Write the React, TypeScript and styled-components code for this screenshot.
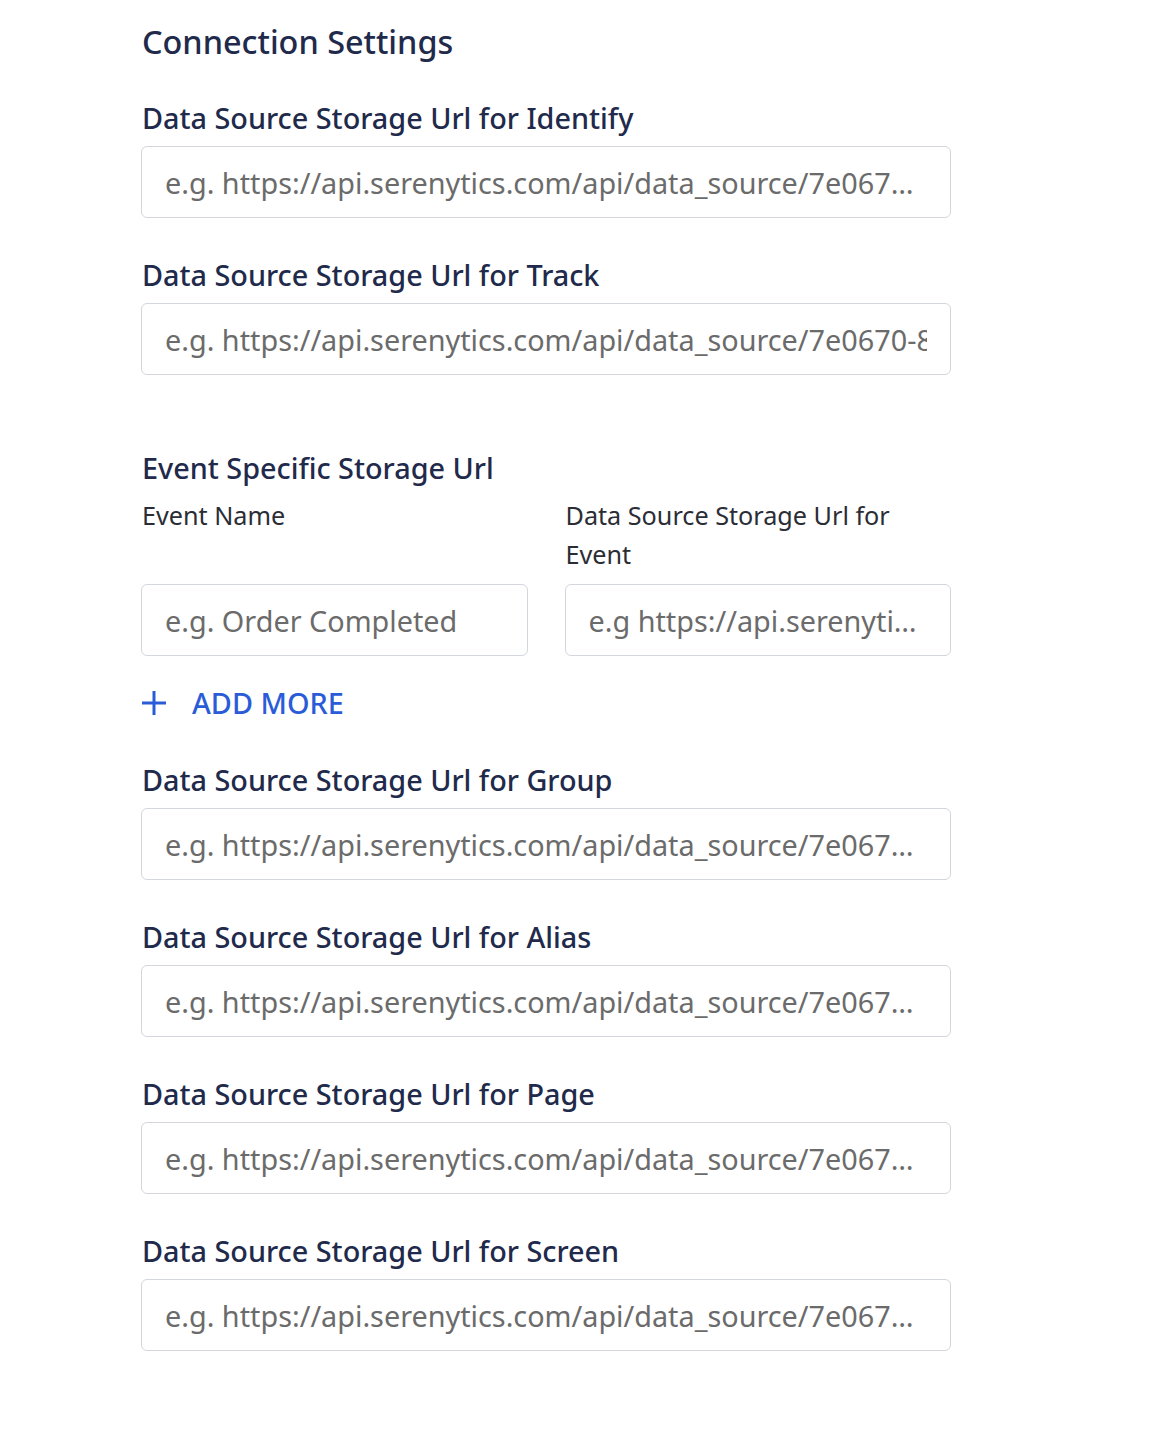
import React from "react";
import styled, { createGlobalStyle } from "styled-components";

const Global = createGlobalStyle`
  html, body { margin: 0; padding: 0; background: #ffffff; }
  body { font-family: "Noto Sans", "Open Sans", sans-serif; }
  * { box-sizing: border-box; }
`;

const Page = styled.div`
  padding: 19px 0 60px 142px;
  width: 952px;
`;

const Heading = styled.h2`
  margin: 0 0 35px;
  font-size: 32.4px;
  line-height: 44px;
  font-weight: 500;
  color: #212a4b;
`;

const Field = styled.div<{ $extra?: number }>`
  display: flex;
  flex-direction: column;
  margin-bottom: ${(p) => 37 + (p.$extra ?? 0)}px;
`;

const Label = styled.label`
  font-size: 28.8px;
  line-height: 40px;
  font-weight: 500;
  color: #212a4b;
  margin-bottom: 8px;
  white-space: nowrap;
`;

const Input = styled.input<{ $clip?: boolean }>`
  width: 100%;
  height: 72px;
  margin: 0 0 0 -1px;
  padding: 0 23px;
  border: 1px solid #d3d6dc;
  border-radius: 6px;
  font-family: "Noto Sans", "Open Sans", sans-serif;
  font-size: 28.8px;
  color: #333;
  background: #fff;
  outline: none;
  text-overflow: ${(p) => (p.$clip ? "clip" : "ellipsis")};
  &::placeholder {
    color: #6b6b6b;
    opacity: 1;
  }
`;

const SectionTitle = styled.div`
  font-size: 28.8px;
  line-height: 40px;
  font-weight: 500;
  color: #212a4b;
  margin-bottom: 8px;
`;

const EventGrid = styled.div`
  display: grid;
  grid-template-columns: 1fr 1fr;
  column-gap: 37px;
  width: 810px;
`;

const EventCol = styled.div`
  display: flex;
  flex-direction: column;
`;

const SubLabel = styled.label`
  font-size: 25.2px;
  line-height: 39px;
  color: #2b2d35;
  height: 78px;
  margin-bottom: 10px;
  padding-right: 40px;
`;

const AddMore = styled.button`
  display: flex;
  align-items: center;
  gap: 25px;
  margin: 27px 0 37px -1px;
  padding: 0;
  border: none;
  background: none;
  font-family: "Noto Sans", "Open Sans", sans-serif;
  font-size: 28.8px;
  line-height: 40px;
  font-weight: 500;
  color: #2b5cd8;
  cursor: pointer;
`;

const FieldWrap = styled.div`
  width: 810px;
`;

const url = "e.g. https://api.serenytics.com/api/data_source/7e0670-8d42-4a77-b6c5-0e3f2b1c9a11/push/3f1";

const PlusIcon = () => (
  <svg width="26" height="26" viewBox="0 0 26 26" fill="none">
    <path d="M13 1v24M1 13h24" stroke="#2b5cd8" strokeWidth="3" />
  </svg>
);

const fieldsBottom = ["Group", "Alias", "Page", "Screen"];

export default function App() {
  return (
    <>
      <Global />
      <Page>
        <Heading>Connection Settings</Heading>
        <FieldWrap>
          <Field>
            <Label>Data Source Storage Url for Identify</Label>
            <Input placeholder={url} />
          </Field>
          <Field $extra={36}>
            <Label>Data Source Storage Url for Track</Label>
            <Input placeholder={url} $clip />
          </Field>
        </FieldWrap>
        <SectionTitle>Event Specific Storage Url</SectionTitle>
        <EventGrid>
          <EventCol>
            <SubLabel>Event Name</SubLabel>
            <Input placeholder="e.g. Order Completed" />
          </EventCol>
          <EventCol>
            <SubLabel>Data Source Storage Url for Event</SubLabel>
            <Input placeholder="e.g https://api.serenytics.com/api/data_source/7e0670" />
          </EventCol>
        </EventGrid>
        <AddMore type="button">
          <PlusIcon />
          ADD MORE
        </AddMore>
        <FieldWrap>
          {fieldsBottom.map((f) => (
            <Field key={f}>
              <Label>Data Source Storage Url for {f}</Label>
              <Input placeholder={url} />
            </Field>
          ))}
        </FieldWrap>
      </Page>
    </>
  );
}
